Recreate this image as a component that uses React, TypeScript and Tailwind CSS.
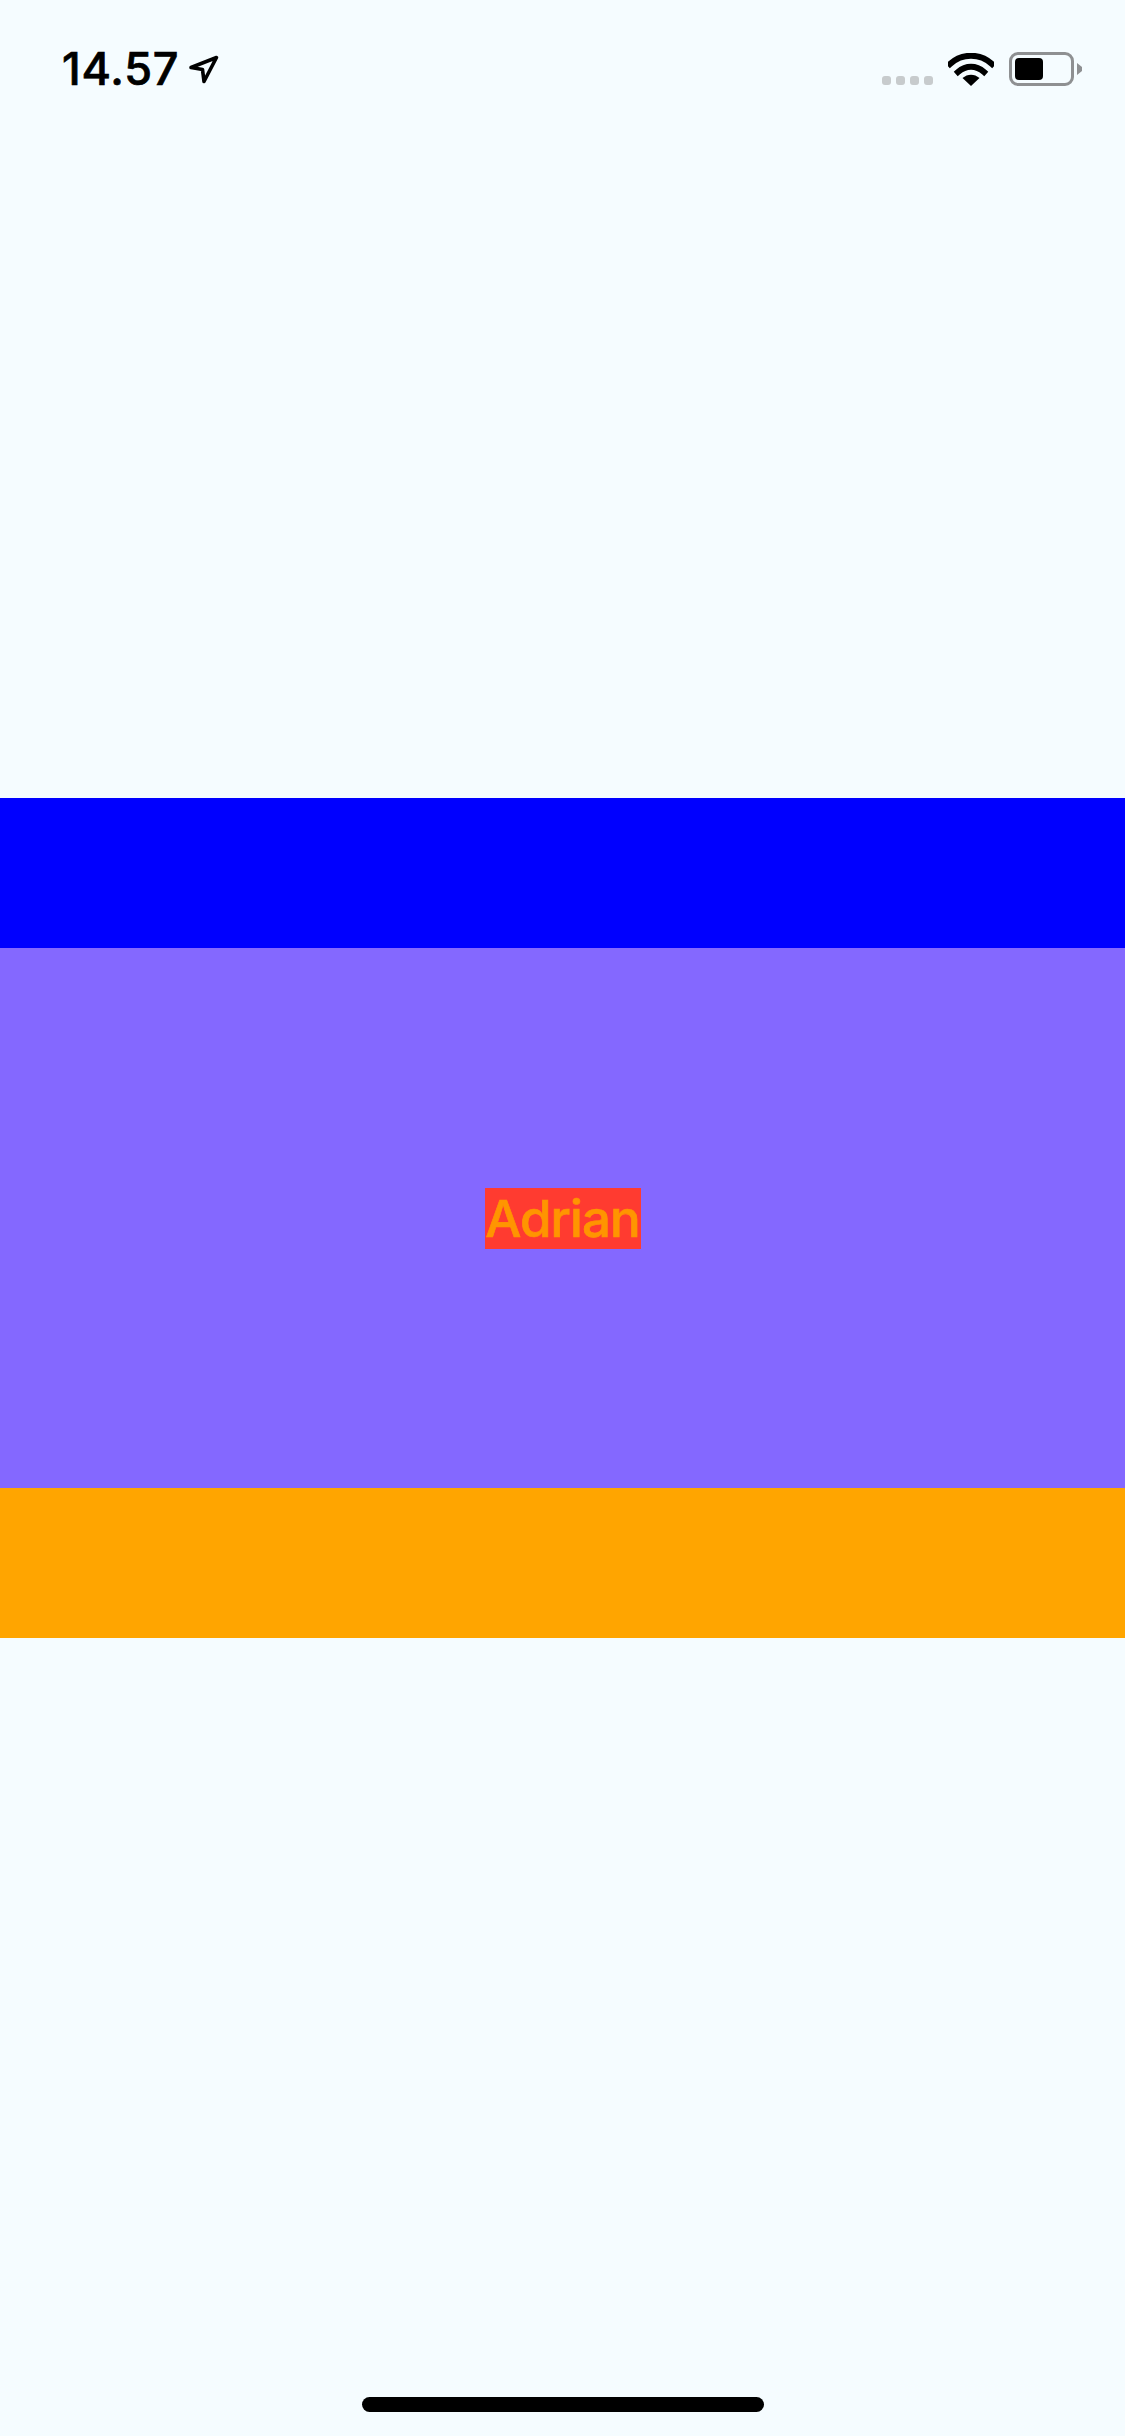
function LocationArrow() {
  return (
    <svg width="32" height="32" viewBox="0 0 32 32" fill="none" className="ml-[9px] mt-[2px]">
      <path d="M28.5 3.5 L3 13.5 L14.5 15.5 L16 27.5 Z" stroke="#000" strokeWidth="3.6" strokeLinejoin="round" />
    </svg>
  );
}

function Wifi() {
  return (
    <svg width="46" height="33" viewBox="0 0 46 33" fill="none">
      <path d="M2 11 C14 0 32 0 44 11" stroke="#000" strokeWidth="6" strokeLinecap="square" />
      <path d="M10 19 C18 12 28 12 36 19" stroke="#000" strokeWidth="6" strokeLinecap="square" />
      <path d="M14.5 25 C19.5 20.5 26.5 20.5 31.5 25 L23 33 Z" fill="#000" />
    </svg>
  );
}

function Battery() {
  return (
    <div className="flex items-center">
      <div className="flex h-[34px] w-[65px] items-center rounded-[9px] border-[3px] border-[#8e9092] p-[3px]">
        <div className="h-[22px] w-[28px] rounded-[4px] bg-black" />
      </div>
      <svg width="5" height="12" viewBox="0 0 5 12" className="ml-[3px]">
        <path d="M0 0 L5 4 L5 8 L0 12 Z" fill="#8e9092" />
      </svg>
    </div>
  );
}

function StatusBar() {
  return (
    <div className="flex h-[132px] items-start justify-between pl-[62px] pr-[43px] pt-[46px]">
      <div className="flex items-center">
        <span className="text-[45px] leading-[46px] font-medium tracking-[0.8px] text-black [font-family:Inter,sans-serif] [-webkit-text-stroke:0.7px_#000]">14.57</span>
        <LocationArrow />
      </div>
      <div className="flex items-end pt-[6px]">
        <div className="mb-[1px] flex gap-[5px]">
          {[0, 1, 2, 3].map((i) => (
            <div key={i} className="h-[9px] w-[9px] rounded-[3px] bg-[#c7cbcd]" />
          ))}
        </div>
        <div className="ml-[15px]">
          <Wifi />
        </div>
        <div className="ml-[15px]">
          <Battery />
        </div>
      </div>
    </div>
  );
}

export default function App() {
  return (
    <div className="flex h-[2436px] flex-col bg-[#f5fcff]">
      <StatusBar />
      <div className="mt-[666px]">
        <div className="h-[150px] bg-[#0000ff]" />
        <div className="flex h-[540px] items-center justify-center bg-[#8468ff]">
          <span className="h-[61px] w-[156px] bg-[#ff3b30] text-center text-[51px] leading-[61px] font-medium tracking-[-0.9px] text-[#ff9500] [font-family:Inter,sans-serif] [-webkit-text-stroke:0.7px_#ff9500]">
            Adrian
          </span>
        </div>
        <div className="h-[150px] bg-[#ffa500]" />
      </div>
      <div className="mt-auto flex justify-center pb-[24px]">
        <div className="h-[15px] w-[402px] rounded-full bg-black" />
      </div>
    </div>
  );
}
